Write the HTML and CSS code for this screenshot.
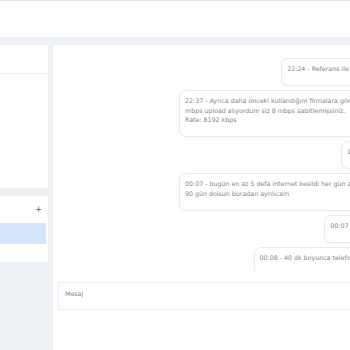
FILE: index.html
```html
<!DOCTYPE html>
<html lang="tr">
<head>
<meta charset="utf-8">
<title>Destek</title>
<link rel="stylesheet" href="styles.css">
</head>
<body>
<header class="topbar"></header>
<div class="layout">
  <aside class="sidebar">
    <section class="card card-a">
      <div class="card-a-head"></div>
    </section>
    <section class="card card-b">
      <div class="card-b-head"><span class="plus">+</span></div>
      <div class="active-row"></div>
    </section>
  </aside>
  <main class="chat">
    <div class="messages">
      <div class="bubble">22:24 - Referans ile bağlandı</div>
      <div class="bubble long">22:37 - Ayrıca daha önceki kullandığım firmalara göre 100<br>mbps upload alıyordum siz 8 mbps sabitlemişsiniz.<br>Rate: 8192 kbps</div>
      <div class="bubble">10:12 - ??</div>
      <div class="bubble long">00:07 - bugün en az 5 defa internet kesildi her gün aynı<br>90 gün dolsun buradan ayrılıcam</div>
      <div class="bubble">00:07 - Rezalet</div>
      <div class="bubble">00:08 - 40 dk boyunca telefonda idim</div>
    </div>
    <div class="composer">
      <div class="input">Mesaj</div>
    </div>
  </main>
</div>
</body>
</html>
```
FILE: styles.css
```css
html, body {
  margin: 0;
  padding: 0;
}
body {
  width: 350px;
  height: 350px;
  overflow: hidden;
  background: #eef2f7;
  font-family: "DejaVu Sans", sans-serif;
  color: #80858d;
}
.topbar {
  height: 36px;
  background: #ffffff;
  border-top: 1px solid #e3e8ee;
}
.layout {
  display: flex;
  gap: 5px;
  padding-top: 8px;
}
.sidebar {
  width: 48px;
  flex-shrink: 0;
  display: flex;
  flex-direction: column;
  gap: 8px;
}
.card {
  background: #ffffff;
}
.card-a {
  height: 143px;
}
.card-a-head {
  height: 28px;
  border-bottom: 1px solid #eceff3;
}
.card-b {
  height: 66px;
}
.card-b-head {
  height: 27px;
  display: flex;
  align-items: center;
  justify-content: flex-end;
  padding-right: 6px;
}
.plus {
  font-size: 8px;
  color: #555a63;
  line-height: 1;
}
.active-row {
  height: 21px;
  margin-right: 2px;
  background: #d7e7fb;
}
.chat {
  width: 360px;
  flex-shrink: 0;
  height: 305px;
  background: #ffffff;
}
.messages {
  height: 214px;
  padding: 13px 29px 0 0;
  display: flex;
  flex-direction: column;
  align-items: flex-end;
  gap: 4px;
  overflow: hidden;
}
.bubble {
  flex-shrink: 0;
  font-size: 6.3px;
  line-height: 9.5px;
  padding: 5px 5px 11.5px 5px;
  border: 1px solid #e7eaee;
  border-radius: 7px;
  box-shadow: 0 1px 2px rgba(30, 40, 60, 0.04);
  background: #ffffff;
  white-space: nowrap;
}
.bubble.long {
  box-sizing: border-box;
  width: 205px;
}
.composer {
  padding: 10px 0 0 5px;
}
.input {
  height: 14px;
  padding: 6px;
  border: 1px solid #eceff3;
  font-size: 6.3px;
  line-height: 10px;
  color: #80858d;
}
```
